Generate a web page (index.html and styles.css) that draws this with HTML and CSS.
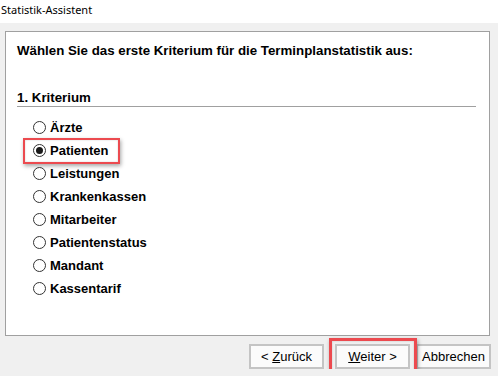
FILE: index.html
```html
<!DOCTYPE html>
<html lang="de">
<head>
    <meta charset="UTF-8">
    <title>Statistik-Assistent</title>
    <link rel="stylesheet" href="styles.css">
</head>
<body>
    <div class="titlebar">Statistik-Assistent</div>

    <div class="dialog">
        <div class="panel">
            <h2 class="prompt">Wählen Sie das erste Kriterium für die Terminplanstatistik aus:</h2>
            <h3 class="group-title">1. Kriterium</h3>
            <ul class="options">
                <li class="option"><span class="radio"></span>Ärzte</li>
                <li class="option"><span class="radio checked"></span>Patienten<span class="mark mark-option"></span></li>
                <li class="option"><span class="radio"></span>Leistungen</li>
                <li class="option"><span class="radio"></span>Krankenkassen</li>
                <li class="option"><span class="radio"></span>Mitarbeiter</li>
                <li class="option"><span class="radio"></span>Patientenstatus</li>
                <li class="option"><span class="radio"></span>Mandant</li>
                <li class="option"><span class="radio"></span>Kassentarif</li>
            </ul>
        </div>

        <div class="buttons">
            <button type="button" class="btn btn-back">&lt; <u>Z</u>urück</button>
            <span class="btn-wrap">
                <button type="button" class="btn"><u>W</u>eiter &gt;</button>
                <span class="mark mark-button"></span>
            </span>
            <button type="button" class="btn">Abbrechen</button>
        </div>
    </div>
</body>
</html>
```

FILE: styles.css
```css
body {
    margin: 0;
    background-color: #f0f0f0;
    font-family: "Liberation Sans", Arial, sans-serif;
    color: #000;
}

.titlebar {
    height: 23px;
    padding-left: 1px;
    line-height: 20px;
    background-color: #fff;
    font-family: "Noto Sans", sans-serif;
    font-size: 11px;
}

.dialog {
    padding: 8px 7px 0 5px;
}

.panel {
    box-sizing: border-box;
    width: 485px;
    height: 305px;
    padding: 11px 13px 0 11px;
    background-color: #fff;
    border: 1px solid #a0a0a0;
}

.prompt {
    margin: 0;
    font-size: 13.3px;
    line-height: 15px;
    font-weight: bold;
}

.group-title {
    margin: 32px 0 0 0;
    padding-bottom: 1px;
    font-size: 13.3px;
    line-height: 15px;
    font-weight: bold;
    border-bottom: 1px solid #a0a0a0;
}

.options {
    list-style: none;
    margin: 9px 0 0 0;
    padding: 0 0 0 16px;
}

.option {
    position: relative;
    display: flex;
    align-items: center;
    height: 23px;
    font-size: 13px;
    font-weight: bold;
}

.radio {
    box-sizing: border-box;
    width: 13px;
    height: 13px;
    margin-right: 4px;
    border: 1px solid #333;
    border-radius: 50%;
    background-color: #fff;
    display: flex;
    align-items: center;
    justify-content: center;
}

.radio.checked::after {
    content: "";
    width: 7px;
    height: 7px;
    border-radius: 50%;
    background-color: #1a1a1a;
}

/* rote Markierungen */
.mark {
    position: absolute;
    border: 2px solid #ec4a4f;
    box-shadow: 1px 2px 4px rgba(0, 0, 0, 0.35), inset 0 0 2px rgba(0, 0, 0, 0.2);
    pointer-events: none;
}

.mark-option {
    left: -10px;
    top: -1px;
    width: 93px;
    height: 22px;
}

.buttons {
    display: flex;
    justify-content: flex-end;
    margin-top: 8px;
}

.btn {
    box-sizing: border-box;
    width: 75px;
    height: 25px;
    padding: 0;
    background-color: #fbfbfb;
    border: 2px solid #c4c4c4;
    font-family: "Liberation Sans", Arial, sans-serif;
    font-size: 13px;
    color: #000;
}

.btn-back {
    margin-right: 11px;
}

.btn-wrap {
    position: relative;
    display: flex;
    margin-right: 6px;
}

.mark-button {
    left: -6px;
    top: -6px;
    right: -7px;
    bottom: -5px;
    border-width: 3px;
}
```
